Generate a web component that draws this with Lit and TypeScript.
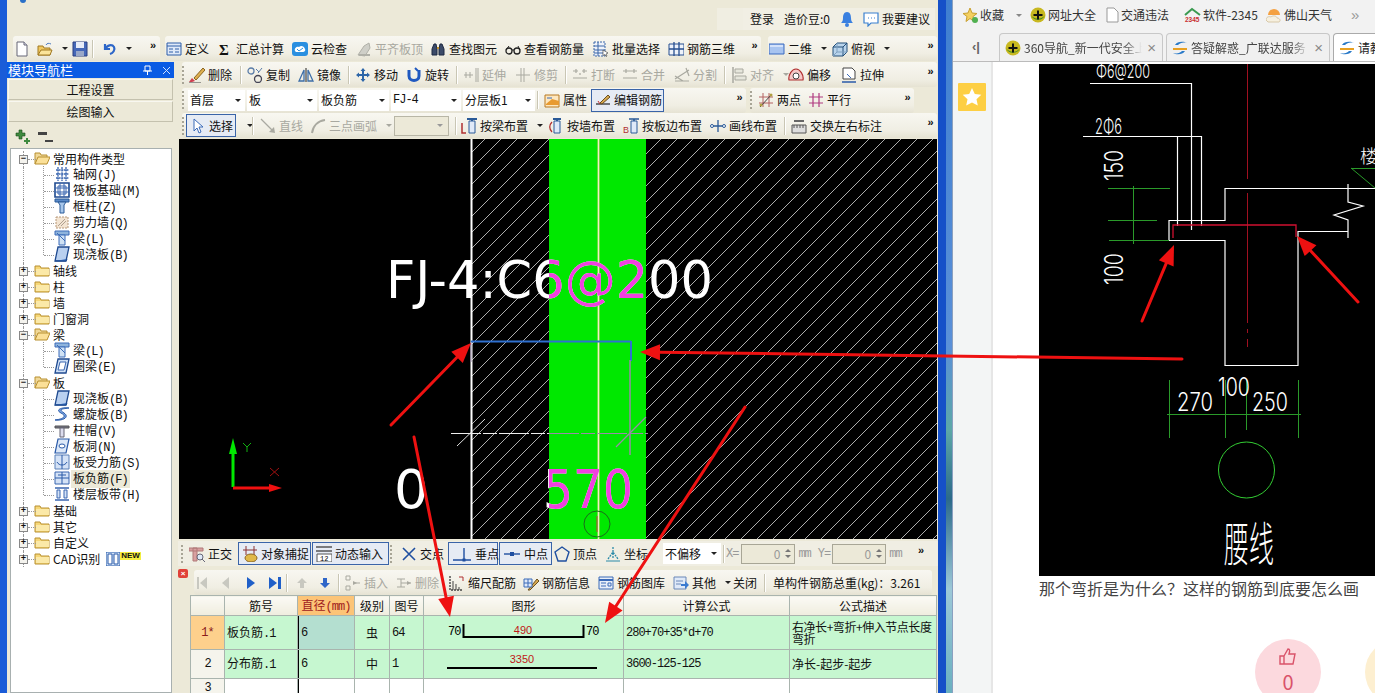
import { LitElement, html, css, svg } from 'lit';
import { customElement } from 'lit/decorators.js';

type Item = {
  x: number;
  i?: string;
  t?: string;
  off?: boolean;
  on?: boolean;
  dd?: boolean;
  sep?: boolean;
  grip?: boolean;
  more?: boolean;
  combo?: boolean;
  field?: boolean;
  m?: boolean;
};

const G = '#a9a9a0';

const icons: Record<string, unknown> = {
  new: svg`<path d="M3 1h7l3 3v11H3z" fill="#fff" stroke="#667"/><path d="M10 1v3h3" fill="#dde" stroke="#667"/>`,
  open: svg`<path d="M1 14V5h5l1 2h6v7z" fill="#f0c860" stroke="#a07820"/><path d="M1 14l3-5h11l-2 5z" fill="#fbe49a" stroke="#a07820"/><path d="M9 4c1-2 3-2 5-1" fill="none" stroke="#4a7ac0"/>`,
  save: svg`<path d="M1 1h14v14H1z" fill="#4668b8" stroke="#2a3f80"/><path d="M4 1h8v6H4z" fill="#e8ecf8"/><path d="M4 10h8v5H4z" fill="#9aa8c8"/>`,
  undo: svg`<path d="M4 3v5h5M4.500 8C6 4 11 3 13 6c1.500 3-1 6-4 7" fill="none" stroke="#2d66c8" stroke-width="2.200"/>`,
  def: svg`<path d="M1 2h14v12H1z" fill="#dfe9f8" stroke="#2f5fa8"/><path d="M1 5h14M3 8h4M3 11h4M9 8h4M9 11h4" stroke="#2f5fa8"/>`,
  sigma: svg`<text x="2" y="14" font-size="15" font-weight="700" fill="#111" font-family="Liberation Serif, serif">Σ</text>`,
  cloud: svg`<rect x="0" y="1" width="16" height="14" rx="3" fill="#2a8fe0"/><path d="M3 10c-1-3 2-5 4-4 2-2 5-1 6 2 1 2-1 3-2 3H4z" fill="#fff"/><path d="M5 8l2 2 4-3" fill="none" stroke="#2a8fe0"/>`,
  flush: svg`<path d="M2 14l6-9 5-3 1 5-5 8z" fill="#cfcfc8" stroke="#b0b0a8"/><path d="M3 14h11" stroke="#b0b0a8" stroke-width="2"/>`,
  binoc: svg`<path d="M2 14V8l2-5h2l1 5v6zM14 14V8l-2-5h-2L9 8v6z" fill="#3b4a68" stroke="#1d2840"/><path d="M7 7h2" stroke="#c09030" stroke-width="2"/>`,
  glasses: svg`<circle cx="4" cy="10" r="3" fill="none" stroke="#222" stroke-width="1.300"/><circle cx="12" cy="10" r="3" fill="none" stroke="#222" stroke-width="1.300"/><path d="M7 9h2M1 9l3-4M15 9l-2-4" stroke="#222"/>`,
  batch: svg`<path d="M1 1h11v14H1z" fill="#eef2fa" stroke="#3a66a8" stroke-dasharray="2 1"/><path d="M1 5h11M1 9h11M1 12h11M5 1v14" stroke="#3a66a8"/><path d="M10 9l5 3-2 1 1 2-1 .500-1-2-2 1z" fill="#fff" stroke="#333" stroke-width=".6"/>`,
  bars: svg`<path d="M1 3h15v11H1z" fill="#eef2fa" stroke="#274f90"/><path d="M6 1v14M11 1v14M1 8h15" stroke="#274f90" stroke-width="1.300"/>`,
  view2: svg`<path d="M0 3h15v10H0z" fill="#a8c4f0" stroke="#3a6ac0"/><path d="M1 4h13v2H1z" fill="#d4e2fa"/>`,
  view3: svg`<path d="M1 6l4-4h10v9l-4 4H1z" fill="#b9d4ec" stroke="#224e78"/><path d="M1 6h10v9M11 6l4-4" fill="none" stroke="#224e78"/><path d="M5 2v9h10M5 11l-4 4" fill="none" stroke="#7fa0c0"/>`,
  erase: svg`<path d="M5 11L14 1l2 2-9 10z" fill="#dfb050" stroke="#8a6420"/><path d="M3 11l3 3-3 1-3 0z" fill="#d04050"/><path d="M0 16h12" stroke="#444"/>`,
  copy: svg`<circle cx="4" cy="4" r="3" fill="none" stroke="#5b7da8" stroke-width="1.300"/><circle cx="11" cy="12" r="3.500" fill="none" stroke="#445" stroke-width="1.300"/><path d="M9 2l3 3M15 1l-4 5" stroke="#5b7da8"/>`,
  mirror: svg`<path d="M8 1v14" stroke="#222"/><path d="M6 3L1 14h5z" fill="none" stroke="#3d6ea8" stroke-width="1.300"/><path d="M10 3l5 11h-5z" fill="none" stroke="#3d6ea8" stroke-width="1.300"/>`,
  move: svg`<path d="M8 1l2.500 3H9v3h3V5.500L15 8l-3 2.500V9H9v3h1.500L8 15l-2.500-3H7V9H4v1.500L1 8l3-2.500V7h3V4H5.500z" fill="#2d66a8"/>`,
  rotate: svg`<path d="M3 3v6c0 6 10 6 10 0V3" fill="none" stroke="#2059c0" stroke-width="3"/><path d="M9 1l3 3" stroke="#2059c0" stroke-width="2"/>`,
  extend: svg`<path d="M1 8h9M3 5v6M7 5v6M13 1v14M15 1v14" stroke="${G}" fill="none"/>`,
  trim: svg`<path d="M1 8h14M6 1v14M9 1v14" stroke="${G}"/>`,
  cut: svg`<path d="M1 4h5M10 4h5M1 11h14M4 2v4M12 2v4M8 6v2" stroke="${G}" stroke-width="1.200" fill="none"/>`,
  merge: svg`<path d="M1 4h14M1 11h14M4 2v4M12 2v4" stroke="${G}" stroke-width="1.200" fill="none"/>`,
  split: svg`<path d="M1 12L15 3M1 14h14M1 9l8 5M12 1l3 8" stroke="${G}" stroke-width="1.200" fill="none"/>`,
  alignl: svg`<path d="M2 0v16" stroke="${G}" stroke-width="1.500"/><path d="M4 2h8v4H4zM4 9h11v4H4z" fill="#e6e6dc" stroke="${G}"/>`,
  offset: svg`<path d="M1 13c-1-5 3-11 7-11s8 6 7 11z" fill="#f6c8c8" stroke="#b03030" stroke-width="1.200"/><circle cx="8" cy="9" r="3" fill="#fff" stroke="#444"/>`,
  stretch: svg`<path d="M2 1h9l3 3v8H2z" fill="#fff" stroke="#444"/><path d="M1 15h14" stroke="#2a5aa8" stroke-width="1.500"/><path d="M6 7l4 4" stroke="#3a6ab8"/>`,
  attr: svg`<path d="M1 3h14v12H1z" fill="#fde7bf" stroke="#b87820"/><path d="M2 12l6-5 7 2v4H2z" fill="#e89a30"/><path d="M3 6h5" stroke="#3a6ab8"/>`,
  edit: svg`<path d="M1 12h14" stroke="#222" stroke-width="1.200"/><path d="M5 11l8-8 2 2-8 7z" fill="#d6a850" stroke="#6a5020"/><path d="M3 9l2 3" stroke="#c03030"/>`,
  two: svg`<path d="M1 5h14M1 11h14M5 1v14M11 1v14" stroke="#b46060"/><path d="M2 15L14 2" stroke="#444"/><circle cx="3" cy="13" r="1.500" fill="#b0a040"/><circle cx="13" cy="3" r="1.500" fill="#b0a040"/>`,
  par: svg`<path d="M1 5h14M1 11h14M5 1v14M11 1v14" stroke="#b03a80" stroke-width="1.200"/>`,
  sel: svg`<path d="M4 1v12l3-3 2 5 2-1-2-5h4z" fill="#fff" stroke="#3a6ab8"/>`,
  line: svg`<path d="M1 1l12 12" stroke="${G}" stroke-width="1.300"/><path d="M15 15l-6-1 5-5z" fill="${G}"/>`,
  arc: svg`<path d="M2 15C3 8 8 3 15 2" fill="none" stroke="${G}" stroke-width="2"/>`,
  beam: svg`<path d="M6 1h10M11 1v14" stroke="#2a5a98" stroke-width="2"/><path d="M8 3h6v12H8z" fill="#dfe9f8" stroke="#2a5a98"/><path d="M1 5v10h4" fill="none" stroke="#b03030" stroke-width="1.500"/>`,
  wall: svg`<path d="M5 1h8M9 1v14" stroke="#2a5a98" stroke-width="2"/><path d="M6 3h6v12H6z" fill="#dfe9f8" stroke="#2a5a98"/><path d="M4 4C1 7 1 11 4 14" fill="none" stroke="#b03030" stroke-width="1.300"/>`,
  edge: svg`<text x="0" y="15" font-size="9" fill="#b03030" font-family="Liberation Sans">B</text><path d="M6 1h10M11 1v14" stroke="#2a5a98" stroke-width="1.600"/><path d="M8 3h6v12H8z" fill="#dfe9f8" stroke="#2a5a98"/>`,
  draw: svg`<path d="M1 8h14M8 2v12" stroke="#2a5a98" stroke-width="1.300"/><circle cx="2" cy="8" r="1.500" fill="#fff" stroke="#2a5a98"/><circle cx="14" cy="8" r="1.500" fill="#fff" stroke="#2a5a98"/>`,
  swap: svg`<path d="M1 7h14v8H1z" fill="#ddd" stroke="#555"/><path d="M3 7v3M6 7v3M9 7v3M12 7v3" stroke="#555"/><path d="M3 3h10" stroke="#666" stroke-width="2"/>`,
  ortho: svg`<path d="M0 2h14v3H0zM4 2h4v13H4z" fill="#d9a0a0" stroke="#b07878"/><circle cx="11" cy="11" r="3" fill="#dfe9f8" stroke="#667"/><path d="M13 13l3 3" stroke="#667"/>`,
  snap: svg`<path d="M4 0v9M12 0v9" stroke="#8a3030"/><path d="M1 4h14" stroke="#8a3030"/><ellipse cx="9" cy="12" rx="6" ry="4" fill="#e0b848" stroke="#8a6420"/>`,
  dyn: svg`<path d="M0 1h16M0 5h16" stroke="#555" stroke-width="1.300"/><path d="M1 8h15v8H1z" fill="#fff" stroke="#555"/><text x="4" y="15" font-size="7" font-family="Liberation Mono">12</text>`,
  cross: svg`<path d="M2 2l12 12M14 2L2 14" stroke="#1f4fa0" stroke-width="1.600"/>`,
  perp: svg`<path d="M1 14h18M12 2v12" stroke="#1f4fa0" stroke-width="1.400"/><rect x="10.500" y="12.500" width="3" height="3" fill="#1f4fa0"/>`,
  mid: svg`<path d="M1 8h16" stroke="#1f4fa0" stroke-width="1.400"/><rect x="7" y="6" width="4" height="4" fill="#1f4fa0"/>`,
  vertex: svg`<path d="M8 1l7 5-3 9H4L1 6z" fill="none" stroke="#1f4fa0" stroke-width="1.400"/>`,
  coord: svg`<path d="M3 13L8 6l5 7M8 1v12" stroke="#2a8aa8" fill="none" stroke-dasharray="2 1" stroke-width="1.300"/><path d="M1 15h14" stroke="#2a8aa8"/>`,
  first: svg`<path d="M2 2h2v12H2zM12 2v12L5 8z" fill="#c8c8c0"/>`,
  prev: svg`<path d="M11 2v12L4 8z" fill="#c8c8c0"/>`,
  next: svg`<path d="M4 2v12l8-6z" fill="#1f5fc8"/>`,
  last: svg`<path d="M2 2v12l8-6zM11 2h3v12h-3z" fill="#1f5fc8"/>`,
  up: svg`<path d="M8 3l5 5h-3v5H6V8H3z" fill="#c8c8c0"/>`,
  down: svg`<path d="M6 3h4v5h3l-5 5-5-5h3z" fill="#2f66c8"/>`,
  ins: svg`<path d="M1 1h4v4H1zM1 11h4v4H1zM8 8h7" stroke="${G}" fill="none"/><path d="M5 8h3v-2l4 2-4 2V8" fill="${G}"/>`,
  del: svg`<path d="M1 4h8M1 12h8M5 4v8M5 8h10" stroke="${G}" fill="none"/><path d="M11 6l4 2-4 2z" fill="${G}"/>`,
  scale: svg`<path d="M1 1v14h13" fill="none" stroke="#444" stroke-width="1.400" stroke-dasharray="2 1"/><path d="M4 15V6M7 15V9M10 15v-3" stroke="#444"/><path d="M10 2h4v4" fill="none" stroke="#b03030"/>`,
  info: svg`<path d="M5 15l9-11 2 2-9 9z" fill="#d6a850" stroke="#6a5020"/><path d="M1 4h8v8H1z" fill="#dfe9f8" stroke="#3a6ab8"/><path d="M1 8h8M5 4v8" stroke="#3a6ab8"/>`,
  lib: svg`<path d="M1 2h14v12H1z" fill="#e8eef8" stroke="#3a6ab8"/><path d="M1 5h14" stroke="#3a6ab8" stroke-width="2"/><path d="M3 8h5M3 11h5M10 8h3v3h-3z" stroke="#3a6ab8" fill="none"/>`,
  other: svg`<path d="M1 2h12v12H1z" fill="#dfe9f8" stroke="#6a88b8"/><path d="M3 6h7M3 9h5" stroke="#6a88b8"/><path d="M8 9h4V6l4 4-4 4v-3H8z" fill="#3a7ad0"/>`,
  folder: svg`<path d="M1 14V4h5l1 2h8v8z" fill="#f6d778" stroke="#b89030"/><path d="M2 7h13v6H2z" fill="#fbe9a8"/>`,
  folderOpen: svg`<path d="M1 14V3h5l1 2h6v3" fill="#f0d898" stroke="#b89030"/><path d="M1 14l3-7h12l-3 7z" fill="#fbe098" stroke="#b89030"/>`,
  grid: svg`<path d="M2 4h13M2 8h13M2 12h13M4 1v14M8 1v14M12 1v14" stroke="#3a66b0" stroke-width="1.300" stroke-dasharray="2 .6"/>`,
  raft: svg`<path d="M1 1h14v14H1z" fill="#fff" stroke="#1f4a90" stroke-width="1.600"/><path d="M4 4h8v8H4zM1 6h14M1 10h14M6 1v14M10 1v14" fill="none" stroke="#3a66b0"/>`,
  col: svg`<path d="M1 1h14v3H1z" fill="#5a8ac8" stroke="#2a5a98"/><path d="M4 4h8l-2 3v8H6V7z" fill="#a8c8ec" stroke="#2a5a98"/>`,
  shear: svg`<path d="M2 3h12v11H2z" fill="#f3e4d2" stroke="#b89878" stroke-dasharray="2 1"/><path d="M4 12l7-7M7 12l5-5" stroke="#b0a090"/>`,
  beamT: svg`<path d="M1 1h14v4H1z" fill="#8fb4dc" stroke="#3a6ab8"/><path d="M5 5h6v10H5z" fill="#cfe1f4" stroke="#3a6ab8"/><path d="M3 3l8 8" stroke="#3a6ab8"/>`,
  slab: svg`<path d="M4 1h11l-3 14H1z" fill="#b9d0f0" stroke="#1f4a90" stroke-width="1.300"/><path d="M1 15h11l1-2" fill="#2f66b8" stroke="#1f4a90"/>`,
  ring: svg`<path d="M4 1h11l-3 14H1z" fill="#cfe0f6" stroke="#1f4a90" stroke-width="1.300"/><path d="M6 4h6l-2 8H4z" fill="#fff" stroke="#3a66b0"/>`,
  helix: svg`<path d="M15 2C7 1 1 4 7 7s3 6-6 7c8 1 15-3 9-7s-2-4 5-5z" fill="#7aa4e0" stroke="#2a5aa8"/>`,
  cap: svg`<path d="M1 4h14v2H1z" fill="#778" stroke="#555"/><path d="M6 6h4v9H6z" fill="#dde" stroke="#667"/>`,
  hole: svg`<path d="M4 1h11l-3 14H1z" fill="#dce8f8" stroke="#2a5aa8" stroke-width="1.200"/><ellipse cx="8" cy="8" rx="3" ry="2" fill="#fff" stroke="#2a5aa8"/>`,
  rebar: svg`<path d="M1 1h14v14H1z" fill="#d4e2f6" stroke="#5a80b8"/><path d="M8 1v14M3 8c2 4 8 4 10 0" fill="none" stroke="#2a5aa8"/>`,
  neg: svg`<path d="M1 2h14v12H1z" fill="#d4e2f6" stroke="#3a66b0"/><path d="M1 8h14M8 2v12M4 5h8" stroke="#2a5aa8"/>`,
  band: svg`<path d="M1 2h14M1 14h14" stroke="#3a66b0" stroke-width="1.500"/><path d="M3 4h3v8H3zM10 4h3v8h-3z" fill="#d4e2f6" stroke="#3a66b0"/>`,
};

const ic = (name: string, size = 16) => html`<svg class="ic" width=${size} height="16" viewBox="0 0 ${size} 16">${icons[name]}</svg>`;

const row1a: Item[] = [
  { x: 13, i: 'new' }, { x: 36, i: 'open', dd: true }, { x: 71, i: 'save' }, { x: 92, sep: true },
  { x: 100, i: 'undo', dd: true }, { x: 146, more: true }, { x: 160 },
];
const row1b: Item[] = [
  { x: 165, i: 'def', t: '定义' }, { x: 216, i: 'sigma', t: '汇总计算' }, { x: 291, i: 'cloud', t: '云检查' },
  { x: 355, i: 'flush', t: '平齐板顶', off: true }, { x: 429, i: 'binoc', t: '查找图元' }, { x: 504, i: 'glasses', t: '查看钢筋量' },
  { x: 592, i: 'batch', t: '批量选择' }, { x: 667, i: 'bars', t: '钢筋三维' }, { x: 748, more: true }, { x: 761 },
];
const row1c: Item[] = [
  { x: 768, i: 'view2', t: '二维', dd: true }, { x: 831, i: 'view3', t: '俯视', dd: true }, { x: 924, more: true }, { x: 937 },
];
const row2: Item[] = [
  { x: 182, grip: true }, { x: 188, i: 'erase', t: '删除' }, { x: 240, sep: true }, { x: 246, i: 'copy', t: '复制' },
  { x: 297, i: 'mirror', t: '镜像' }, { x: 348, sep: true }, { x: 354, i: 'move', t: '移动' }, { x: 405, i: 'rotate', t: '旋转' },
  { x: 456, sep: true }, { x: 462, i: 'extend', t: '延伸', off: true }, { x: 514, i: 'trim', t: '修剪', off: true }, { x: 565, sep: true },
  { x: 571, i: 'cut', t: '打断', off: true }, { x: 621, i: 'merge', t: '合并', off: true }, { x: 673, i: 'split', t: '分割', off: true },
  { x: 724, sep: true }, { x: 730, i: 'alignl', t: '对齐', off: true, dd: true }, { x: 787, i: 'offset', t: '偏移' },
  { x: 840, i: 'stretch', t: '拉伸' }, { x: 924, more: true }, { x: 937 },
];
const row3a: Item[] = [
  { x: 182, grip: true }, { x: 188, combo: true, t: '首层' }, { x: 247, combo: true, t: '板' }, { x: 319, combo: true, t: '板负筋' },
  { x: 391, combo: true, t: 'FJ-4', m: true }, { x: 463, combo: true, t: '分层板1' }, { x: 537, sep: true },
  { x: 543, i: 'attr', t: '属性' }, { x: 591, i: 'edit', t: '编辑钢筋', on: true }, { x: 665 }, { x: 733, more: true }, { x: 746 },
];
const row3b: Item[] = [
  { x: 750, grip: true }, { x: 757, i: 'two', t: '两点' }, { x: 807, i: 'par', t: '平行' }, { x: 901, more: true }, { x: 914 },
];
const row4: Item[] = [
  { x: 182, grip: true }, { x: 186, i: 'sel', t: '选择', on: true }, { x: 237, dd: true }, { x: 252, sep: true },
  { x: 259, i: 'line', t: '直线', off: true }, { x: 309, i: 'arc', t: '三点画弧', off: true, dd: true }, { x: 394, field: true },
  { x: 455, sep: true }, { x: 460, i: 'beam', t: '按梁布置', dd: true }, { x: 547, i: 'wall', t: '按墙布置' },
  { x: 622, i: 'edge', t: '按板边布置' }, { x: 709, i: 'draw', t: '画线布置' }, { x: 784, sep: true },
  { x: 790, i: 'swap', t: '交换左右标注' }, { x: 924, more: true }, { x: 937 },
];
const snapRow: Item[] = [
  { x: 181, grip: true }, { x: 188, i: 'ortho', t: '正交' }, { x: 238, i: 'snap', t: '对象捕捉', on: true }, { x: 312, i: 'dyn', t: '动态输入', on: true },
  { x: 390, grip: true }, { x: 400, i: 'cross', t: '交点' }, { x: 448, i: 'perp', t: '垂点', on: true }, { x: 499, i: 'mid', t: '中点', on: true },
  { x: 553, i: 'vertex', t: '顶点' }, { x: 604, i: 'coord', t: '坐标' }, { x: 654, grip: true },
];
const gridRow: Item[] = [
  { x: 194, i: 'first' }, { x: 217, i: 'prev' }, { x: 242, i: 'next' }, { x: 266, i: 'last' }, { x: 286, sep: true },
  { x: 293, i: 'up' }, { x: 316, i: 'down' }, { x: 338, sep: true }, { x: 344, i: 'ins', t: '插入', off: true },
  { x: 395, i: 'del', t: '删除', off: true }, { x: 448, i: 'scale', t: '缩尺配筋' }, { x: 522, i: 'info', t: '钢筋信息' },
  { x: 597, i: 'lib', t: '钢筋图库' }, { x: 672, i: 'other', t: '其他', dd: true }, { x: 732, t: '关闭' }, { x: 764, sep: true },
  { x: 772, t: '单构件钢筋总重(kg)：3.261' }, { x: 932 },
];

type Node = { t: string; kind: 'open' | 'closed' | 'leaf'; i?: string; sel?: boolean; last?: boolean; badge?: boolean };
const tree: Node[] = [
  { t: '常用构件类型', kind: 'open' },
  { t: '轴网(J)', kind: 'leaf', i: 'grid' }, { t: '筏板基础(M)', kind: 'leaf', i: 'raft' }, { t: '框柱(Z)', kind: 'leaf', i: 'col' },
  { t: '剪力墙(Q)', kind: 'leaf', i: 'shear' }, { t: '梁(L)', kind: 'leaf', i: 'beamT' }, { t: '现浇板(B)', kind: 'leaf', i: 'slab', last: true },
  { t: '轴线', kind: 'closed' }, { t: '柱', kind: 'closed' }, { t: '墙', kind: 'closed' }, { t: '门窗洞', kind: 'closed' },
  { t: '梁', kind: 'open' }, { t: '梁(L)', kind: 'leaf', i: 'beamT' }, { t: '圈梁(E)', kind: 'leaf', i: 'ring', last: true },
  { t: '板', kind: 'open' }, { t: '现浇板(B)', kind: 'leaf', i: 'slab' }, { t: '螺旋板(B)', kind: 'leaf', i: 'helix' },
  { t: '柱帽(V)', kind: 'leaf', i: 'cap' }, { t: '板洞(N)', kind: 'leaf', i: 'hole' }, { t: '板受力筋(S)', kind: 'leaf', i: 'rebar' },
  { t: '板负筋(F)', kind: 'leaf', i: 'neg', sel: true }, { t: '楼层板带(H)', kind: 'leaf', i: 'band', last: true },
  { t: '基础', kind: 'closed' }, { t: '其它', kind: 'closed' }, { t: '自定义', kind: 'closed' }, { t: 'CAD识别', kind: 'closed', badge: true },
];

// hand drawn red marks pasted over the whole screenshot
const arrow = (x1: number, y1: number, x2: number, y2: number, w = 3) => {
  const a = Math.atan2(y2 - y1, x2 - x1);
  const l = 20;
  const hw = 8;
  const bx = x2 - Math.cos(a) * l;
  const by = y2 - Math.sin(a) * l;
  const nx = -Math.sin(a) * hw;
  const ny = Math.cos(a) * hw;
  return svg`<line x1=${x1} y1=${y1} x2=${bx} y2=${by} stroke="#ee1111" stroke-width=${w} stroke-linecap="round"/>
    <polygon points="${x2},${y2} ${bx + nx},${by + ny} ${bx - nx},${by - ny}" fill="#ee1111"/>`;
};

@customElement('app-root')
export class AppRoot extends LitElement {
  static styles = css`
    :host {
      display: block;
      width: 1375px;
      height: 693px;
      overflow: hidden;
      position: relative;
      font: 12px/16px "Noto Sans CJK SC", "Liberation Sans", sans-serif;
      color: #111;
      background: #fff;
    }
    .page { display: flex; height: 693px; }
    .app {
      width: 931px;
      flex: none;
      border-left: 7px solid #1a5cd8;
      border-right: 8px solid #1550c8;
      background: #ece9d8;
      display: flex;
      flex-direction: column;
      position: relative;
    }
    .desk {
      width: 6px;
      flex: none;
      background: linear-gradient(180deg, #3f7fd0 0%, #5a90d8 50%, #5da8a8 62%, #2c6a8a 72%, #9cc8d8 85%, #6ab0c0 100%);
    }
    .top { height: 36px; flex: none; display: flex; justify-content: flex-end; align-items: flex-start; padding: 8px 3px 0 0; box-sizing: border-box; }
    .logo { width: 6px; height: 3px; border-radius: 0 0 3px 3px; background: #2a70c8; margin: -8px auto 0 13px; }
    .ghost { width: 26px; height: 22px; background: #f0eee2; }
    .login { width: 192px; height: 22px; background: #f1efe4; display: flex; align-items: center; padding-left: 7px; box-sizing: border-box; }
    .login span { margin-right: 10px; }
    .login .ic { margin-right: 8px; flex: none; }
    .bars { height: 26px; flex: none; display: flex; }
    .bar {
      display: flex;
      align-items: center;
      height: 25px;
      background: linear-gradient(180deg, #f8f7f1, #f0eee3 70%, #e6e3d3);
      border-radius: 3px;
      flex: none;
      white-space: nowrap;
    }
    .it { display: flex; align-items: center; flex: none; height: 100%; box-sizing: border-box; gap: 3px; padding-left: 1px; }
    .it .ic { flex: none; }
    .off { color: #a8a8a0; }
    .on > .in {
      display: flex; align-items: center; gap: 3px; height: 23px; background: #e6ebf4; border: 1px solid #3a64a8; box-sizing: border-box;
      padding: 0 3px; width: 100%; margin-left: -1px;
    }
    .in { display: flex; align-items: center; gap: 3px; }
    .dd { width: 0; height: 0; border: 3px solid transparent; border-top: 3px solid #222; border-bottom: 0; margin-left: 6px; flex: none; }
    .off .dd { border-top-color: #a8a8a0; }
    .sep { display: flex; align-items: center; height: 100%; flex: none; }
    .sep::before { content: ""; width: 1px; height: 18px; background: #c9c6b4; box-shadow: 1px 0 #fff; }
    .grip { display: flex; align-items: center; height: 100%; flex: none; }
    .grip::before { content: ""; width: 2px; height: 18px; background: repeating-linear-gradient(180deg, #a8a596 0 2px, transparent 2px 4px); }
    .more { flex: none; font: 700 11px/10px "Liberation Sans", sans-serif; align-self: flex-start; padding-top: 4px; text-align: center; color: #111; }
    .combo { display: flex; align-items: center; justify-content: space-between; height: 21px; background: #fff; flex: none; padding: 0 4px 0 2px; box-sizing: border-box; margin-right: 2px; }
    .combo i { width: 0; height: 0; border: 3px solid transparent; border-top: 3px solid #222; border-bottom: 0; }
    .field { flex: none; }
    .field > div { width: 55px; height: 20px; border: 1px solid #b8b6a6; background: #ece9d8; box-sizing: border-box; display: flex; align-items: center; justify-content: flex-end; padding-right: 5px; }
    .field i { width: 0; height: 0; border: 3px solid transparent; border-top: 3px solid #999; border-bottom: 0; }
    .m { font-family: "Liberation Mono", monospace; letter-spacing: -1px; }
    .body { flex: 1; display: flex; min-height: 0; }
    .nav { width: 167px; flex: none; display: flex; flex-direction: column; }
    .nav-title {
      height: 16px; background: #0a5be4; color: #fff; display: flex; align-items: center; justify-content: space-between; padding: 0 3px 0 1px;
      font-size: 13px; flex: none;
    }
    .nav-title div { display: flex; gap: 10px; align-items: center; }
    .nav-btn { height: 21px; margin: 1px 1px 0 1px; border: 1px solid #c4c1ae; border-top-color: #f8f7f0; border-left-color: #f8f7f0; background: #ece9d8; text-align: center; line-height: 19px; flex: none; box-sizing: border-box; }
    .tools { height: 26px; display: flex; align-items: center; gap: 4px; padding: 4px 0 0 8px; flex: none; box-sizing: border-box; }
    .tree { flex: 1; margin: 0 2px 0 3px; background: #fff; border: 1px solid #a8b0b0; padding-top: 2px; overflow: hidden; }
    .tr { height: 16px; position: relative; display: flex; align-items: center; white-space: nowrap; }
    .v1 { position: absolute; left: 12px; top: 0; bottom: 0; border-left: 1px dotted #999; }
    .v2 { position: absolute; left: 32px; top: -1px; bottom: 0; border-left: 1px dotted #999; }
    .v2.end { bottom: 8px; }
    .h1 { position: absolute; left: 17px; width: 8px; top: 8px; border-top: 1px dotted #999; }
    .h2 { position: absolute; left: 33px; width: 10px; top: 8px; border-top: 1px dotted #999; }
    .box {
      position: absolute; left: 8px; top: 4px; width: 9px; height: 9px; border: 1px solid #888; background: #f4f3ee; box-sizing: border-box;
      display: flex; align-items: center; justify-content: center; font: 700 9px/7px "Liberation Mono", monospace;
    }
    .tr .fold { margin-left: 23px; }
    .tr .fold + b { font-weight: 400; margin-left: 3px; }
    .tr .leaf { margin-left: 43px; position: relative; }
    .tr .leaf + b { font-weight: 400; margin-left: 1px; padding: 0 2px; }
    .tr .leaf + b.cur { background: #ece9d8; }
    .new { font: 700 8px/8px "Liberation Sans", sans-serif; color: #111; background: #f6ee40; padding: 0 1px; align-self: flex-start; margin-top: 1px; }
    .gap { width: 4px; flex: none; }
    .main { width: 760px; flex: none; display: flex; flex-direction: column; }
    .tb { height: 25px; display: flex; flex: none; padding-left: 4px; }
    .canvas { height: 400px; margin: 1px 1px 0; flex: none; display: block; background: #000; }
    .snap { height: 25px; margin-top: 2px; display: flex; padding-left: 3px; flex: none; background: #f0eee3; align-items: center; }
    .snap .bar { background: none; }
    .sbox { width: 54px; height: 20px; border: 1px solid #a8a696; background: #ece9d8; box-sizing: border-box; display: flex; align-items: center; justify-content: flex-end; padding-right: 3px; gap: 5px; color: #999; flex: none; }
    .spin { display: flex; flex-direction: column; gap: 3px; }
    .spin i { width: 0; height: 0; border: 3px solid transparent; }
    .spin i:first-child { border-bottom: 3px solid #777; border-top: 0; }
    .spin i:last-child { border-top: 3px solid #777; border-bottom: 0; }
    .grey { color: #999; flex: none; }
    .gridwrap { flex: 1; display: flex; min-height: 0; margin-top: 4px; position: relative; }
    .gutter { width: 12px; flex: none; }
    .x { width: 10px; height: 9px; background: #e04038; border-radius: 2px; color: #fff; font: 700 8px/9px "Liberation Sans", sans-serif; text-align: center; margin-top: -1px; }
    .gridcol { flex: 1; min-width: 0; display: flex; flex-direction: column; }
    .gbar { height: 25px; flex: none; display: flex; padding-left: 4px; }
    table { border-collapse: collapse; table-layout: fixed; width: 746px; background: #fff; }
    th, td { border: 1px solid #a9b4ae; padding: 0 2px; font-weight: 400; overflow: hidden; white-space: nowrap; }
    th { height: 19px; background: linear-gradient(180deg, #fbfaf5, #efedde); line-height: 16px; }
    th.cur { background: #fcc477; color: #a02020; }
    td.n { background: #f5f4ec; text-align: center; }
    td.n.cur { background: #fdd08c; color: #8a1a1a; }
    .g td:not(.n) { background: #c6f7d0; }
    .g td.cell { background: #b4dfd0; }
    td.k { box-shadow: inset 1px 0 #000; padding-left: 3px; }
    td.c { text-align: center; }
    td.wrap { line-height: 12px; letter-spacing: -.45px; }
    td.shape { padding: 0; }
    td.shape svg { display: block; }
    .browser { flex: 1; min-width: 0; display: flex; flex-direction: column; background: #fff; border-left: 1px solid #8aa0c0; }
    .fav { height: 30px; flex: none; background: #f2f2f2; display: flex; align-items: center; white-space: nowrap; color: #333; }
    .fav > span { display: flex; align-items: center; gap: 2px; flex: none; }
    .tabs { height: 32px; flex: none; background: #f2f2f2; border-bottom: 1px solid #bbb; display: flex; align-items: flex-end; box-sizing: border-box; overflow: hidden; }
    .nav-back { width: 46px; flex: none; align-self: center; text-align: center; color: #666; font: 700 13px/16px "Liberation Sans", sans-serif; margin-top: 2px; }
    .tab {
      width: 164px; height: 28px; flex: none; box-sizing: border-box; margin-right: 3px; border: 1px solid #c8c8c8; border-bottom: 0; border-radius: 4px 4px 0 0;
      background: #f0f0f0; display: flex; align-items: center; padding-left: 5px; gap: 3px; white-space: nowrap; color: #444; position: relative; overflow: hidden;
    }
    .tab.act { background: #fff; border-color: #aaa; color: #222; }
    .tab u { text-decoration: none; flex: 1; overflow: hidden; -webkit-mask-image: linear-gradient(90deg, #000 85%, transparent); mask-image: linear-gradient(90deg, #000 85%, transparent); }
    .tab em { font-style: normal; color: #888; font: 15px/16px "Liberation Sans", sans-serif; padding: 0 6px 0 2px; }
    .web { flex: 1; display: flex; min-height: 0; }
    .side { width: 40px; flex: none; background: #f3f5f5; border-right: 2px solid #e6e6e6; box-sizing: border-box; padding: 21px 0 0 5px; }
    .star { width: 28px; height: 28px; background: #fdcf44; display: flex; align-items: center; justify-content: center; border-radius: 1px; }
    .post { flex: 1; min-width: 0; padding: 2px 0 0 46px; overflow: hidden; }
    .post svg.draw { display: block; background: #000; }
    .cap { font-size: 16px; line-height: 24px; color: #444; white-space: nowrap; }
    .votes { display: flex; gap: 44px; margin: 39px 0 0 216px; }
    .vote { width: 66px; height: 66px; border-radius: 50%; background: #fcd9de; color: #d9536a; flex: none; display: flex; flex-direction: column; align-items: center; padding-top: 9px; box-sizing: border-box; font-size: 20px; line-height: 22px; gap: 5px; }
    .vote.y { background: #fdefd0; }
    .marks { position: absolute; left: 0; top: 0; pointer-events: none; }
    .cad { font-family: Inter, "Liberation Sans", sans-serif; font-weight: 300; fill: #fff; }
  `;

  // lay a toolbar out from the x positions of its items
  private bar(items: Item[], cls = 'bar') {
    const cells = items.slice(0, -1).map((it, n) => {
      const w = items[n + 1].x - it.x;
      const st = `width:${w}px`;
      if (it.sep) return html`<span class="sep" style=${st}></span>`;
      if (it.grip) return html`<span class="grip" style=${st}></span>`;
      if (it.more) return html`<span class="more" style=${st}>»</span>`;
      if (it.field) return html`<span class="field" style=${st}><div><i></i></div></span>`;
      if (it.combo) return html`<span class="combo ${it.m ? 'm' : ''}" style="width:${w - 2}px">${it.t}<i></i></span>`;
      const size = it.i === 'perp' ? 20 : it.i === 'mid' ? 18 : 16;
      if (it.on) return html`<span class="it on" style=${st}><span class="in">${ic(it.i!, size)}<span>${it.t}</span></span></span>`;
      return html`<span class="it ${it.off ? 'off' : ''}" style=${st}><span class="in">${it.i ? ic(it.i, size) : ''}${it.t ? html`<span>${it.t}</span>` : ''}</span>${it.dd ? html`<span class="dd"></span>` : ''}</span>`;
    });
    return html`<div class=${cls} style="width:${items[items.length - 1].x - items[0].x}px">${cells}</div>`;
  }

  private treeRows() {
    return tree.map((n) => {
      if (n.kind === 'leaf') {
        return html`<div class="tr"><span class="v1"></span><span class="v2 ${n.last ? 'end' : ''}"></span><span class="h2"></span>
          <span class="leaf">${ic(n.i!)}</span><b class=${n.sel ? 'cur' : ''}>${this.labelled(n.t)}</b></div>`;
      }
      return html`<div class="tr"><span class="v1"></span><span class="h1"></span><span class="box">${n.kind === 'open' ? '−' : '+'}</span>
        <span class="fold">${ic(n.kind === 'open' ? 'folderOpen' : 'folder')}</span><b>${n.t}</b>
        ${n.badge ? html`<svg style="margin-left:6px" width="14" height="14" viewBox="0 0 14 14"><path d="M0 0h14v14H0z" fill="#cfe0f6" stroke="#2a5aa8"/><path d="M2 2h4v10H2zM8 2h4v10H8z" fill="#fff" stroke="#2a5aa8"/></svg><span class="new">NEW</span>` : ''}</div>`;
    });
  }

  private labelled(t: string) {
    const p = t.indexOf('(');
    if (p < 0) return t;
    return html`${t.slice(0, p)}<span class="m">${t.slice(p)}</span>`;
  }

  private canvas() {
    return html`<svg class="canvas" width="758" height="400" viewBox="179 139 758 400">
      <defs>
        <pattern id="hatch" width="16" height="16" patternUnits="userSpaceOnUse">
          <path d="M-2 2L2 -2M0 16L16 0M14 18L18 14" stroke="#d8d8d8" stroke-width=".8"/>
        </pattern>
        <clipPath id="grn"><rect x="549" y="139" width="97" height="400"/></clipPath>
      </defs>
      <rect x="471" y="139" width="467" height="400" fill="url(#hatch)"/>
      <rect x="549" y="139" width="97" height="400" fill="#00e800"/>
      <path d="M598.500 139v400" stroke="#d8d878" stroke-width="2"/><path d="M598.500 139v400" stroke="#fff" stroke-width=".6"/>
      <path d="M471.500 139v400" stroke="#fff" stroke-width="2"/>
      <g font-family="DejaVu Sans, sans-serif">
        <text x="386" y="298" font-size="52" fill="#fff" textLength="327" lengthAdjust="spacingAndGlyphs">FJ-4:C6@200</text>
        <text x="386" y="298" font-size="52" fill="#f040e0" textLength="327" lengthAdjust="spacingAndGlyphs" clip-path="url(#grn)">FJ-4:C6@200</text>
        <text x="394" y="508" font-size="54" fill="#fff">0</text>
        <text x="543" y="508" font-size="54" fill="#fff" textLength="90" lengthAdjust="spacingAndGlyphs">570</text>
        <text x="543" y="508" font-size="54" fill="#f040e0" textLength="90" lengthAdjust="spacingAndGlyphs" clip-path="url(#grn)">570</text>
      </g>
      <path d="M471 341.500h160M631 341v20" stroke="#2f70d0" stroke-width="2" fill="none"/>
      <path d="M630 360v95" stroke="#9a8aa8" stroke-width="1.500"/>
      <path d="M471 342v20" stroke="#9a8aa8"/>
      <path d="M451 433.500h98" stroke="#eee" stroke-dasharray="30 2 14 2"/>
      <path d="M549 433.500h99" stroke="#9a8aa8" stroke-dasharray="30 2 14 2"/>
      <path d="M457 446l28-27" stroke="#ddd"/>
      <path d="M616 447l30-30" stroke="#9a8aa8" stroke-width="1.300"/>
      <circle cx="597" cy="524" r="13" fill="none" stroke="#1c6a1c"/>
      <path d="M597 516v16" stroke="#c04040"/>
      <path d="M233 487v-34" stroke="#00e800" stroke-width="3"/><path d="M233 438l-4 16h8z" fill="#00e800"/>
      <path d="M233 488h38" stroke="#f01010" stroke-width="3"/><path d="M282 488l-13-4v8z" fill="#f01010"/>
      <path d="M243 443l4 4 4-4M247 447v5" stroke="#10b010" fill="none"/>
      <path d="M270 468l9 8M279 468l-9 8" stroke="#a01010"/>
    </svg>`;
  }

  private drawing() {
    return html`<svg class="draw" width="336" height="512" viewBox="1039 64 336 512">
      <g stroke="#fff" fill="none" stroke-width="1.200">
        <path d="M1090 83.500h101.500V230M1083 136.500h118.500V226M1177.500 136.500V226"/>
        <path d="M1375 188.500h-150V220.500h-56V240.500h56V365.500h73V231.500h50M1348 184v18l15 4-29 9 14 5v18"/>
      </g>
      <path d="M1247.500 64v115M1247.500 193v154" stroke="#a01020" stroke-dasharray="130 6 4 6"/>
      <path d="M1173 238v-13h123v12" stroke="#d01030" stroke-width="1.300" fill="none"/>
      <path d="M1108 188.500h62M1108 220.500h49M1109 240.500h60M1133.500 186v58" stroke="#2a9a2a" fill="none"/>
      <path d="M1351 168.500h24M1351 168l24 20" stroke="#2a9a2a" fill="none"/>
      <path d="M1169.500 380v58M1225.500 380v58M1246.500 380v50M1298.500 380v58M1167 414.500h134" stroke="#2a9a2a" fill="none"/>
      <circle cx="1246.500" cy="470" r="28" fill="none" stroke="#33cc33"/>
      <g class="cad">
        <text x="1096" y="78" font-size="19" textLength="54" lengthAdjust="spacingAndGlyphs">Φ6@200</text>
        <text x="1095" y="134" font-size="22" textLength="27" lengthAdjust="spacingAndGlyphs">2Φ6</text>
        <text x="1177" y="411" font-size="25" textLength="36" lengthAdjust="spacingAndGlyphs">270</text>
        <text x="1218" y="396" font-size="25" textLength="32" lengthAdjust="spacingAndGlyphs">100</text>
        <text x="1252" y="411" font-size="25" textLength="36" lengthAdjust="spacingAndGlyphs">250</text>
        <text transform="translate(1123 181) rotate(-90)" font-size="25" textLength="31" lengthAdjust="spacingAndGlyphs">150</text>
        <text transform="translate(1123 285) rotate(-90)" font-size="25" textLength="32" lengthAdjust="spacingAndGlyphs">100</text>
        <text x="1360" y="163" font-size="18" font-family="Noto Sans CJK SC">楼</text>
        <text transform="translate(1224 561) scale(1 1.850)" font-size="25" font-family="Noto Sans CJK SC">腰线</text>
      </g>
    </svg>`;
  }

  render() {
    return html`<div class="page">
      <div class="app">
        <div class="top"><span class="logo"></span><span class="ghost"></span>
          <div class="login"><span>登录</span><span>造价豆:0</span>
            <svg class="ic" width="14" height="16" viewBox="0 0 14 16"><path d="M7 1c3 0 4 3 4 6s1 4 2 5H1c1-1 2-2 2-5s1-6 4-6z" fill="#3a80e0"/><circle cx="7" cy="14" r="2" fill="#3a80e0"/></svg>
            <svg class="ic" style="margin-left:1px;margin-right:3px" width="16" height="16" viewBox="0 0 16 16"><path d="M1 2h14v10H8l-3 3v-3H1z" fill="#fff" stroke="#3a80d0" stroke-width="1.200"/><path d="M5 7h1M8 7h1M11 7h1" stroke="#3a80d0"/></svg>
            <span style="margin:0">我要建议</span></div>
        </div>
        <div class="bars" style="padding-left:6px">${this.bar(row1a)}<span style="width:5px"></span>${this.bar(row1b)}<span style="width:7px"></span>${this.bar(row1c)}</div>
        <div class="body">
          <div class="nav">
            <div class="nav-title"><span>模块导航栏</span><div>
              <svg width="9" height="10" viewBox="0 0 9 10"><path d="M2 1h5v5H2zM0 6h9M4.500 6v4" stroke="#fff" fill="none"/></svg>
              <svg width="9" height="9" viewBox="0 0 9 9"><path d="M1 1l7 7M8 1L1 8" stroke="#cfe0ff"/></svg></div></div>
            <div class="nav-btn">工程设置</div>
            <div class="nav-btn">绘图输入</div>
            <div class="tools">
              <svg width="18" height="16" viewBox="0 0 18 16"><path d="M4 1h3v3h3v3H7v3H4V7H1V4h3z" fill="#3f8a3f" stroke="#1a4a1a" stroke-width=".6"/><path d="M11 9h2v2h2v2h-2v2h-2v-2H9v-2h2z" fill="#3f8a3f"/></svg>
              <svg width="18" height="16" viewBox="0 0 18 16"><path d="M1 3h9v3H1z" fill="#444"/><path d="M8 11h8v2H8z" fill="#444"/></svg>
            </div>
            <div class="tree">${this.treeRows()}</div>
          </div>
          <div class="gap"></div>
          <div class="main">
            <div class="tb">${this.bar(row2)}</div>
            <div class="tb" style="height:26px;align-items:center">${this.bar(row3a)}<span style="width:4px"></span>${this.bar(row3b)}</div>
            <div class="tb">${this.bar(row4)}</div>
            ${this.canvas()}
            <div class="snap">
              ${this.bar(snapRow)}
              <span class="combo" style="width:58px;margin-left:9px">不偏移<i></i></span>
              <span class="sep" style="width:3px"></span>
              <span class="grey m">X=</span><span style="width:3px"></span>
              <div class="sbox">0<span class="spin"><i></i><i></i></span></div>
              <span class="grey m" style="margin:0 7px 0 3px">mm</span>
              <span class="grey m">Y=</span><span style="width:2px"></span>
              <div class="sbox">0<span class="spin"><i></i><i></i></span></div>
              <span class="grey m" style="margin:0 13px 0 3px">mm</span>
              <span class="more" style="width:13px">»</span>
            </div>
            <div class="gridwrap">
              <div class="gutter"><div class="x">×</div></div>
              <div class="gridcol">
                <div class="gbar">${this.bar(gridRow)}</div>
                <table>
                  <colgroup><col style="width:34px"/><col style="width:73px"/><col style="width:57px"/><col style="width:35px"/><col style="width:34px"/><col style="width:200px"/><col style="width:166px"/><col style="width:147px"/></colgroup>
                  <tr><th></th><th>筋号</th><th class="cur">直径<span class="m">(mm)</span></th><th>级别</th><th>图号</th><th>图形</th><th>计算公式</th><th>公式描述</th></tr>
                  <tr class="g" style="height:34px"><td class="n cur m">1*</td><td>板负筋<span class="m">.1</span></td><td class="k cell m">6</td><td class="c">虫</td><td class="m">64</td>
                    <td class="shape"><svg width="200" height="33"><text x="24" y="19" font-size="12" font-family="Liberation Mono" letter-spacing="-1">70</text><path d="M39.500 8v13h120V9" fill="none" stroke="#000" stroke-width="2"/><text x="99" y="18" text-anchor="middle" font-size="11" fill="#c01818" font-family="Liberation Sans">490</text><text x="162" y="19" font-size="12" font-family="Liberation Mono" letter-spacing="-1">70</text></svg></td>
                    <td class="m">280+70+35*d+70</td><td class="wrap">右净长+弯折+伸入节点长度<br/>弯折</td></tr>
                  <tr class="g" style="height:29px"><td class="n m">2</td><td>分布筋<span class="m">.1</span></td><td class="k m">6</td><td class="c">中</td><td class="m">1</td>
                    <td class="shape"><svg width="200" height="28"><path d="M23 18h150" stroke="#000" stroke-width="2"/><text x="98" y="13" text-anchor="middle" font-size="11" fill="#c01818" font-family="Liberation Sans">3350</text></svg></td>
                    <td class="m">3600-125-125</td><td>净长-起步-起步</td></tr>
                  <tr style="height:18px"><td class="n m">3</td><td></td><td class="k"></td><td></td><td></td><td></td><td></td><td></td></tr>
                </table>
              </div>
            </div>
          </div>
        </div>
      </div>
      <div class="desk"></div>
      <div class="browser">
        <div class="fav">
          <span style="margin-left:9px;width:68px"><svg width="16" height="16" viewBox="0 0 16 16"><path d="M8 1l2 5 5 .500-4 3 1 5-4-3-4 3 1-5-4-3 5-.500z" fill="#f4d060" stroke="#c8a030"/><circle cx="13" cy="13" r="3" fill="#50b050"/></svg>收藏<i class="dd" style="margin-left:10px;border-top-color:#888"></i></span>
          <span style="width:76px"><svg width="16" height="16" viewBox="0 0 16 16"><circle cx="8" cy="8" r="7.500" fill="#c8b820"/><path d="M1 8c3 5 11 5 14 0a7.500 7.500 0 0 1-14 0z" fill="#3a8a20"/><path d="M7 3.500h2V7h3.500v2H9v3.500H7V9H3.500V7H7z" fill="#111"/></svg>网址大全</span>
          <span style="width:78px"><svg width="13" height="16" viewBox="0 0 13 16"><path d="M1 1h7l4 4v10H1z" fill="#fff" stroke="#999"/></svg>交通违法</span>
          <span style="width:82px"><svg width="17" height="16" viewBox="0 0 17 16"><path d="M1 8l7-6 8 6" fill="none" stroke="#3a9a50" stroke-width="2"/><text x="1" y="15" font-size="6.500" fill="#c83030" font-family="Liberation Sans" font-weight="700">2345</text></svg>软件-2345</span>
          <span><svg width="16" height="16" viewBox="0 0 16 16"><path d="M2 8a6 6 0 0 1 12 0z" fill="#f4a040"/><path d="M0 13c0-3 3-4 5-3 2-2 6-1 6 1 3 0 4 3 2 4H2z" fill="#f6f0e0" stroke="#d8c8a8"/></svg>佛山天气</span>
          <span style="margin-left:19px;color:#999;font:15px/16px 'Liberation Sans'">»</span>
        </div>
        <div class="tabs">
          <div class="nav-back">‹|</div>
          <div class="tab"><svg width="16" height="16" viewBox="0 0 16 16"><circle cx="8" cy="8" r="7.500" fill="#c8b820"/><path d="M1 8c3 5 11 5 14 0a7.500 7.500 0 0 1-14 0z" fill="#3a8a20"/><path d="M7 3.500h2V7h3.500v2H9v3.500H7V9H3.500V7H7z" fill="#111"/></svg><u>360导航_新一代安全上</u><em>×</em></div>
          <div class="tab"><svg width="16" height="16" viewBox="0 0 16 16"><path d="M3 5c2-4 9-4 12-2-4-1-7 0-9 2zM13 11c-2 4-9 4-12 2 4 1 7 0 9-2z" fill="#2a7ac8"/><path d="M1 9h14" stroke="#e8a020" stroke-width="2"/></svg><u>答疑解惑_广联达服务</u><em>×</em></div>
          <div class="tab act"><svg width="16" height="16" viewBox="0 0 16 16"><path d="M3 5c2-4 9-4 12-2-4-1-7 0-9 2zM13 11c-2 4-9 4-12 2 4 1 7 0 9-2z" fill="#2a7ac8"/><path d="M1 9h14" stroke="#e8a020" stroke-width="2"/></svg><span>请教</span></div>
        </div>
        <div class="web">
          <div class="side"><div class="star"><svg width="20" height="20" viewBox="0 0 20 20"><path d="M10 1l2.800 6 6.500.800-4.800 4.400 1.300 6.400L10 15.400 4.200 18.600l1.300-6.400L.700 7.800 7.200 7z" fill="#fff"/></svg></div></div>
          <div class="post">
            ${this.drawing()}
            <div class="cap">那个弯折是为什么？这样的钢筋到底要怎么画</div>
            <div class="votes">
              <div class="vote"><svg width="18" height="18" viewBox="0 0 18 18"><path d="M1 8h4v8H1zM5 8l4-7c2 0 2 2 1 5h6l-2 10H5" fill="none" stroke="#d9536a" stroke-width="1.400"/></svg>0</div>
              <div class="vote y"></div>
            </div>
          </div>
        </div>
      </div>
    </div>
    <svg class="marks" width="1375" height="693">
      ${arrow(391, 425, 471, 343)}
      ${arrow(414, 437, 450, 617)}
      ${arrow(745, 407, 605, 623)}
      ${arrow(1182, 359, 640, 352)}
      ${arrow(1142, 321, 1174, 245)}
      ${arrow(1358, 302, 1297, 236)}
    </svg>`;
  }
}
